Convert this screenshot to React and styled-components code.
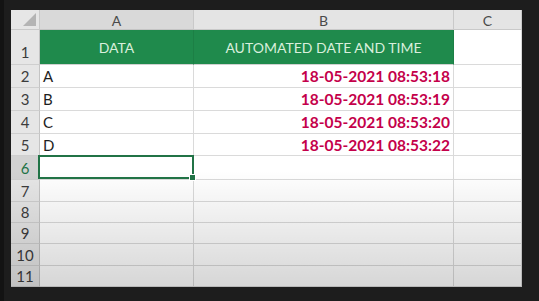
import React from "react";
import styled, { createGlobalStyle, css } from "styled-components";

const Global = createGlobalStyle`
  html, body { margin: 0; padding: 0; background: #1c1c1c; }
  body { width: 539px; height: 301px; overflow: hidden; }
`;

const Screen = styled.div`
  width: 539px;
  height: 301px;
  box-sizing: border-box;
  padding: 10px 17px 14px 11px;
  background: #1d1d1d;
  border-left: 4px solid #131313;
  padding-left: 7px;
`;

const Sheet = styled.div`
  position: relative;
  display: grid;
  grid-template-columns: 29px 154px 260px 68px;
  grid-template-rows: 20px 35px 23px 23px 23px 22px 24px 22px 21px 21px 22px 21px;
  background: #ffffff;
  font-family: Lato, "Open Sans", sans-serif;
  &::after {
    content: "";
    position: absolute;
    inset: 0;
    pointer-events: none;
    background: linear-gradient(to bottom, rgba(0,0,0,0) 0%, rgba(0,0,0,0) 58%, rgba(0,0,0,0.16) 100%);
  }
`;

const Corner = styled.div`
  position: relative;
  background: #e6e6e6;
  border-right: 1px solid #c9c9c9;
  border-bottom: 1px solid #c9c9c9;
  &::before {
    content: "";
    position: absolute;
    right: 3px;
    bottom: 3px;
    width: 0;
    height: 0;
    border-left: 13px solid transparent;
    border-bottom: 13px solid #b4b4b4;
  }
`;

const ColHead = styled.div`
  display: flex;
  align-items: center;
  justify-content: center;
  background: ${(p) => (p.$active ? "#d9d9d9" : "#e4e4e4")};
  border-right: 1px solid #c9c9c9;
  border-bottom: ${(p) => (p.$active ? "1px solid #c4c4c4" : "1px solid #c9c9c9")};
  color: #4a4a4a;
  font-size: 14px;
  padding-top: 1px;
  box-sizing: border-box;
`;

const RowHead = styled.div`
  display: flex;
  align-items: ${(p) => (p.$tall ? "flex-end" : "center")};
  justify-content: center;
  padding-bottom: ${(p) => (p.$tall ? "3px" : "0")};
  box-sizing: border-box;
  background: ${(p) => (p.$active ? "#d2d2d2" : "#e6e6e6")};
  border-right: 1px solid #c4c4c4;
  border-bottom: 1px solid #cfcfcf;
  color: ${(p) => (p.$active ? "#217346" : "#3c3c3c")};
  font-size: 15px;
`;

const Cell = styled.div`
  position: relative;
  display: flex;
  align-items: center;
  box-sizing: border-box;
  border-right: 1px solid #dadada;
  border-bottom: 1px solid #dadada;
  padding: 0 3px;
  font-size: 15px;
  color: #1e1e1e;
  justify-content: ${(p) => (p.$align === "right" ? "flex-end" : p.$align === "center" ? "center" : "flex-start")};
  ${(p) =>
    p.$head &&
    css`
      background: #1f8a4c;
      color: #d9efdc;
      font-size: 14px;
      border-right: 1px solid #1c7f45;
      border-bottom: 1px solid #d0d0d0;
    `}
`;

const DateText = styled.span`
  color: #c4004a;
  font-weight: 700;
  font-size: 15.5px;
  letter-spacing: 0px;
`;

const Selection = styled.div`
  position: absolute;
  inset: -1px -1px 0px -2px;
  border: 2px solid #217346;
  pointer-events: none;
  z-index: 2;
  &::after {
    content: "";
    position: absolute;
    right: -4px;
    bottom: -4px;
    width: 5px;
    height: 5px;
    background: #217346;
    border: 1px solid #ffffff;
  }
`;

const rows = [
  { n: 2, a: "A", b: "18-05-2021 08:53:18" },
  { n: 3, a: "B", b: "18-05-2021 08:53:19" },
  { n: 4, a: "C", b: "18-05-2021 08:53:20" },
  { n: 5, a: "D", b: "18-05-2021 08:53:22" },
  { n: 6, a: "", b: "", sel: true },
  { n: 7 },
  { n: 8 },
  { n: 9 },
  { n: 10 },
  { n: 11 },
];

export default function App() {
  return (
    <>
      <Global />
      <Screen>
        <Sheet>
          <Corner />
          <ColHead $active>A</ColHead>
          <ColHead>B</ColHead>
          <ColHead>C</ColHead>

          <RowHead $tall>1</RowHead>
          <Cell $head $align="center">DATA</Cell>
          <Cell $head $align="center">AUTOMATED DATE AND TIME</Cell>
          <Cell />

          {rows.map((r) => (
            <React.Fragment key={r.n}>
              <RowHead $active={r.sel}>{r.n}</RowHead>
              <Cell>
                {r.a}
                {r.sel && <Selection />}
              </Cell>
              <Cell $align="right">{r.b && <DateText>{r.b}</DateText>}</Cell>
              <Cell />
            </React.Fragment>
          ))}
        </Sheet>
      </Screen>
    </>
  );
}
